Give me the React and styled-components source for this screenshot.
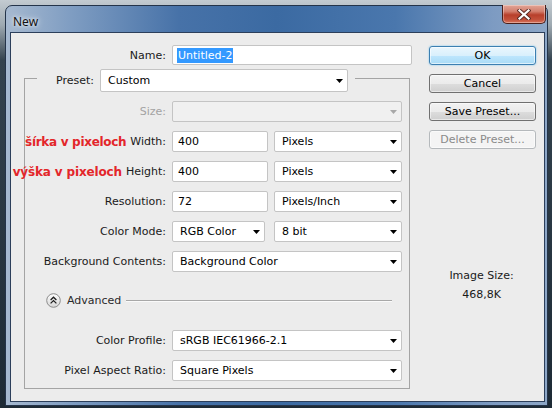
import React from 'react';
import styled, { createGlobalStyle } from 'styled-components';

const GlobalStyle = createGlobalStyle`
  html, body { margin: 0; padding: 0; }
  body { background: #1c2731; }
`;

const Screen = styled.div`
  width: 552px;
  height: 408px;
  box-sizing: border-box;
  padding: 5px 4px 2px 5px;
  overflow: hidden;
  background: linear-gradient(180deg, #c3cbd1 0, #9ea9b1 25px, #34434f 60px, #1d2a35 100%);
`;

const Window = styled.div`
  height: 100%;
  box-sizing: border-box;
  display: flex;
  flex-direction: column;
  border: 1px solid #24344a;
  border-radius: 7px 7px 0 0;
  background: linear-gradient(90deg, #a6b9d0 0%, #7f9dc2 12%, #4772a8 32%, #3b6aa2 50%, #4a77ad 72%, #7d9bc2 90%, #8da7c7 100%);
`;

const TitleBar = styled.div`
  height: 26px;
  display: flex;
  align-items: flex-start;
  padding-left: 7px;
`;

const Title = styled.span`
  font: 12px "Noto Sans", "Open Sans", sans-serif;
  color: #111;
  line-height: 16px;
  margin-top: 8px;
  text-shadow: 0 0 6px rgba(255, 255, 255, 0.9), 0 0 3px rgba(255, 255, 255, 0.7);
`;

const CloseButton = styled.div`
  margin: -1px 1px 0 auto;
  width: 44px;
  height: 19px;
  box-sizing: border-box;
  border: 1px solid #4a1f1a;
  border-top: none;
  border-radius: 0 0 5px 5px;
  background: linear-gradient(180deg, #e2a596 0%, #d3806f 35%, #b83f2b 55%, #c2503a 80%, #d8745c 100%);
  box-shadow: inset 0 0 0 1px rgba(255, 255, 255, 0.35);
  display: flex;
  align-items: center;
  justify-content: center;
`;

const ClientWrap = styled.div`
  flex: 1;
  display: flex;
  padding: 0 2px 3px 4px;
`;

const Client = styled.div`
  flex: 1;
  display: flex;
  border: 1px solid #2c3f5b;
  background: #ececec;
  padding: 12px 8px 0 0;
  font: 11px "DejaVu Sans", Tahoma, sans-serif;
  color: #1a1a1a;
`;

const FormCol = styled.div`
  width: 410px;
  display: flex;
  flex-direction: column;
`;

const Row = styled.div`
  display: grid;
  grid-template-columns: ${p => p.$label}px 230px;
  column-gap: 6px;
  align-items: center;
  height: ${p => p.$h || 21}px;
`;

const NameRow = styled(Row)`
  grid-template-columns: 155px 240px;
`;

const Label = styled.div`
  display: flex;
  justify-content: flex-end;
  align-items: center;
  gap: 4px;
  white-space: nowrap;
  color: ${p => (p.$disabled ? '#a3a3a3' : '#1a1a1a')};
`;

const Note = styled.span`
  font: bold 12px "DejaVu Sans", Verdana, sans-serif;
  letter-spacing: ${p => p.$ls || -0.3}px;
  color: #e3262a;
`;

const Group = styled.div`
  margin: 13px 0 0 13px;
  width: 386px;
  box-sizing: border-box;
  border: 1px solid #a4a4a4;
  border-top: none;
  padding-bottom: 7px;
`;

const GroupHead = styled.div`
  display: flex;
  align-items: flex-start;
  margin: -9px -1px 0;
`;

const Rule = styled.div`
  height: 1px;
  margin-top: 9px;
  background: #a4a4a4;
  width: ${p => (p.$w ? `${p.$w}px` : 'auto')};
  flex: ${p => (p.$w ? 'none' : 1)};
`;

const Legend = styled.div`
  display: flex;
  align-items: center;
  gap: 5px;
  padding: 0 7px 0 19px;
`;

const LegendLabel = styled.span`
  width: 39px;
  white-space: nowrap;
`;

const Fields = styled.div`
  display: flex;
  flex-direction: column;
  gap: 9px;
  margin-top: 9px;
`;

const Pair = styled.div`
  display: flex;
  gap: ${p => p.$gap}px;
`;

const FieldBox = styled.div`
  height: ${p => p.$h || 21}px;
  box-sizing: border-box;
  width: ${p => (p.$w ? `${p.$w}px` : 'auto')};
  flex: ${p => (p.$w ? 'none' : 1)};
  border: 1px solid #c4c4c4;
  border-radius: 2px;
  background: ${p => (p.$disabled ? '#f0f0f0' : '#fff')};
  display: flex;
  align-items: center;
  padding: 0 4px 0 ${p => p.$pl || 5}px;
  color: #000;
  white-space: nowrap;
  overflow: hidden;
`;

const ArrowSvg = styled.svg`
  flex: none;
  margin-left: auto;
`;

const Selected = styled.span`
  background: #3399ff;
  color: #fff;
  line-height: 15px;
  padding: 0 1px;
`;

const AdvancedRow = styled.div`
  display: flex;
  align-items: center;
  height: 16px;
  margin: 11px 17px 13px 0;
  padding-left: 21px;
  gap: 6px;
  color: #2a2a2a;
`;

const Line = styled.div`
  flex: 1;
  height: 1px;
  margin-left: -1px;
  background: #a8a8a8;
  box-shadow: 0 1px 0 #fafafa;
`;

const RightCol = styled.div`
  width: 107px;
  margin-left: 8px;
  padding-top: 1px;
  display: flex;
  flex-direction: column;
  gap: 9px;
`;

const Button = styled.div`
  height: 19px;
  box-sizing: border-box;
  border-radius: 3px;
  display: flex;
  align-items: center;
  justify-content: center;
  border: 1px solid ${p => (p.$primary ? '#3c7fb1' : p.$disabled ? '#b5b9bc' : '#707070')};
  color: ${p => (p.$disabled ? '#8a8a8a' : '#000')};
  background: ${p =>
    p.$primary
      ? 'linear-gradient(180deg, #eaf6fd 0%, #d9f0fc 50%, #bee6fd 51%, #a9dbf6 100%)'
      : p.$disabled
      ? '#f4f4f4'
      : 'linear-gradient(180deg, #f2f2f2 0%, #ebebeb 50%, #dddddd 51%, #cfcfcf 100%)'};
  box-shadow: ${p => (p.$primary ? '0 0 2px #6fc3f0, inset 0 0 0 1px rgba(255,255,255,0.6)' : 'inset 0 0 0 1px rgba(255,255,255,0.5)')};
`;

const ImageSize = styled.div`
  margin-top: 111px;
  display: flex;
  flex-direction: column;
  align-items: center;
  gap: 5px;
  line-height: 14px;
  color: #1a1a1a;
  padding-right: 2px;
`;

const Arrow = ({ disabled }) => (
  <ArrowSvg width="7" height="4" viewBox="0 0 7 4">
    <polygon points="0,0 7,0 3.5,4" fill={disabled ? '#a8a8a8' : '#000'} />
  </ArrowSvg>
);

const Combo = ({ value, w, h, disabled }) => (
  <FieldBox $w={w} $h={h} $disabled={disabled} $pl={7}>
    <span>{value}</span>
    <Arrow disabled={disabled} />
  </FieldBox>
);

const Input = ({ value, w }) => (
  <FieldBox $w={w}>{value}</FieldBox>
);

const AdvancedIcon = () => (
  <svg width="15" height="15" viewBox="0 0 15 15">
    <defs>
      <linearGradient id="adv" x1="0" y1="0" x2="0" y2="1">
        <stop offset="0" stopColor="#fdfdfd" />
        <stop offset="1" stopColor="#d6d6d6" />
      </linearGradient>
    </defs>
    <circle cx="7.5" cy="7.5" r="6.8" fill="url(#adv)" stroke="#8c8c8c" />
    <polyline points="4.6,7 7.5,4.2 10.4,7" fill="none" stroke="#1e1e1e" strokeWidth="1.3" />
    <polyline points="4.6,10.4 7.5,7.6 10.4,10.4" fill="none" stroke="#1e1e1e" strokeWidth="1.3" />
  </svg>
);

const CloseGlyph = () => (
  <svg width="14" height="11" viewBox="0 0 14 11">
    <path d="M2.5 1.5 L11.5 9.5 M11.5 1.5 L2.5 9.5" stroke="#5a2a24" strokeWidth="4" strokeLinecap="square" />
    <path d="M2.5 1.5 L11.5 9.5 M11.5 1.5 L2.5 9.5" stroke="#ffffff" strokeWidth="2.2" strokeLinecap="square" />
  </svg>
);

const App = () => (
  <>
    <GlobalStyle />
    <Screen>
      <Window>
        <TitleBar>
          <Title>New</Title>
          <CloseButton>
            <CloseGlyph />
          </CloseButton>
        </TitleBar>
        <ClientWrap>
          <Client>
            <FormCol>
              <NameRow $h={20}>
                <Label>Name:</Label>
                <FieldBox $h={20} $pl={4}>
                  <Selected>Untitled-2</Selected>
                </FieldBox>
              </NameRow>

              <Group>
                <GroupHead>
                  <Rule $w={13} />
                  <Legend>
                    <LegendLabel>Preset:</LegendLabel>
                    <Combo value="Custom" w={248} h={23} />
                  </Legend>
                  <Rule />
                </GroupHead>

                <Fields>
                  <Row $label={141}>
                    <Label $disabled>Size:</Label>
                    <Combo value="" disabled />
                  </Row>
                  <Row $label={141}>
                    <Label>
                      <Note>šírka v pixeloch</Note>Width:
                    </Label>
                    <Pair $gap={6}>
                      <Input value="400" w={96} />
                      <Combo value="Pixels" />
                    </Pair>
                  </Row>
                  <Row $label={141}>
                    <Label>
                      <Note $ls={-0.15}>výška v pixeloch</Note>Height:
                    </Label>
                    <Pair $gap={6}>
                      <Input value="400" w={96} />
                      <Combo value="Pixels" />
                    </Pair>
                  </Row>
                  <Row $label={141}>
                    <Label>Resolution:</Label>
                    <Pair $gap={6}>
                      <Input value="72" w={96} />
                      <Combo value="Pixels/Inch" />
                    </Pair>
                  </Row>
                  <Row $label={141}>
                    <Label>Color Mode:</Label>
                    <Pair $gap={9}>
                      <Combo value="RGB Color" w={93} />
                      <Combo value="8 bit" />
                    </Pair>
                  </Row>
                  <Row $label={141}>
                    <Label>Background Contents:</Label>
                    <Combo value="Background Color" />
                  </Row>

                  <AdvancedRow>
                    <AdvancedIcon />
                    <span>Advanced</span>
                    <Line />
                  </AdvancedRow>

                  <Row $label={141}>
                    <Label>Color Profile:</Label>
                    <Combo value="sRGB IEC61966-2.1" />
                  </Row>
                  <Row $label={141}>
                    <Label>Pixel Aspect Ratio:</Label>
                    <Combo value="Square Pixels" />
                  </Row>
                </Fields>
              </Group>
            </FormCol>

            <RightCol>
              <Button $primary>OK</Button>
              <Button>Cancel</Button>
              <Button>Save Preset...</Button>
              <Button $disabled>Delete Preset...</Button>
              <ImageSize>
                <span>Image Size:</span>
                <span>468,8K</span>
              </ImageSize>
            </RightCol>
          </Client>
        </ClientWrap>
      </Window>
    </Screen>
  </>
);

export default App;
